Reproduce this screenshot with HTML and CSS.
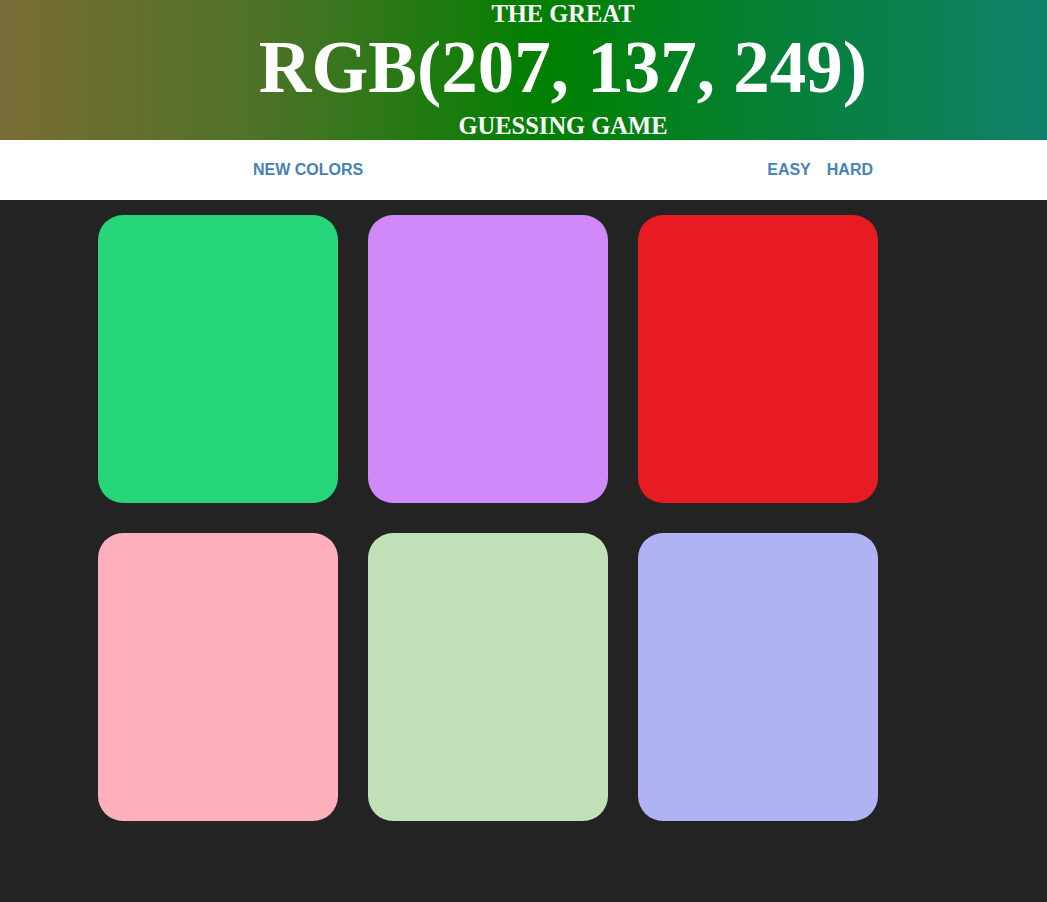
FILE: index.html
```html
<!DOCTYPE html>
<html lang="en">
<head>
<meta charset="utf-8">
<title>Color Game</title>
<link rel="stylesheet" href="styles.css">
</head>
<body>
<header class="banner">
  <h1 class="title">
    <span class="title-small">THE GREAT</span>
    <span class="title-big">RGB(207, 137, 249)</span>
    <span class="title-small title-bottom">GUESSING GAME</span>
  </h1>
</header>
<nav class="stripe">
  <div class="stripe-inner">
    <button class="btn">NEW COLORS</button>
    <div class="modes">
      <button class="btn">EASY</button>
      <button class="btn">HARD</button>
    </div>
  </div>
</nav>
<main class="board">
  <div class="square sq-green"></div>
  <div class="square sq-purple"></div>
  <div class="square sq-red"></div>
  <div class="square sq-pink"></div>
  <div class="square sq-mint"></div>
  <div class="square sq-lavender"></div>
</main>
</body>
</html>
```
FILE: styles.css
```css
html, body {
  margin: 0;
  padding: 0;
}
body {
  background: #232323;
  font-family: "Liberation Sans", Arial, sans-serif;
  min-height: 902px;
}
.banner {
  height: 140px;
  overflow: hidden;
  background: linear-gradient(to right, #7a6c36 0%, #4d7228 25%, #008000 52%, #058038 75%, #10816a 100%);
  padding-left: 79px;
  color: #fff;
}
.title {
  margin: 0;
  font-family: "Liberation Serif", "Times New Roman", serif;
  font-weight: bold;
  text-align: center;
}
.title-small {
  display: block;
  font-size: 24.5px;
  line-height: 28px;
}
.title-big {
  display: block;
  font-size: 73px;
  line-height: 80px;
}
.title-bottom {
  padding-top: 2px;
  line-height: 32px;
}
.stripe {
  background: #fff;
  height: 60px;
  padding-left: 79px;
  display: flex;
  justify-content: center;
}
.stripe-inner {
  width: 620px;
  display: flex;
  justify-content: space-between;
  align-items: center;
}
.modes {
  display: flex;
  gap: 16px;
}
.btn {
  border: none;
  background: none;
  padding: 0;
  margin: 0;
  font-family: "Liberation Sans", Arial, sans-serif;
  font-weight: bold;
  font-size: 16px;
  line-height: 18px;
  color: #4682b4;
  cursor: pointer;
}
.board {
  display: grid;
  grid-template-columns: repeat(3, 240px);
  grid-auto-rows: 288px;
  gap: 30px;
  padding: 15px 0 0 98px;
}
.square {
  border-radius: 25px;
}
.sq-green { background: #27d67a; }
.sq-purple { background: #cf89f9; }
.sq-red { background: #e71b22; }
.sq-pink { background: #feafbc; }
.sq-mint { background: #c1e1b8; }
.sq-lavender { background: #b0b3f3; }
```
